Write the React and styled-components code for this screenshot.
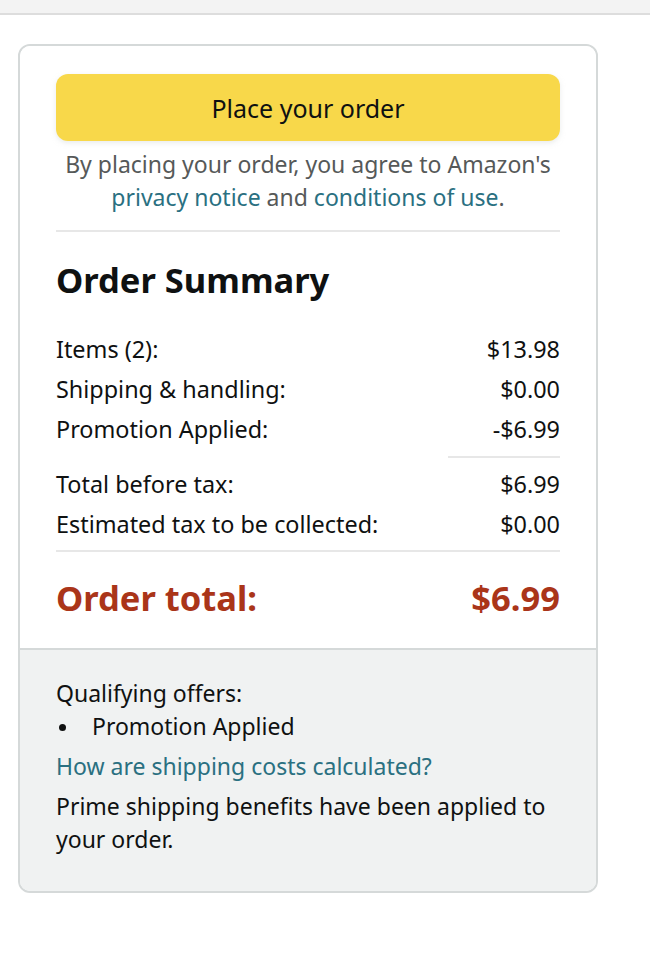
import React from "react";
import styled, { createGlobalStyle } from "styled-components";

const GlobalStyle = createGlobalStyle`
  body {
    margin: 0;
    background: #ffffff;
    font-family: "Noto Sans", "Liberation Sans", Arial, sans-serif;
    color: #0f1111;
  }
`;

const rows = [
  { label: "Items (2):", value: "$13.98" },
  { label: "Shipping & handling:", value: "$0.00" },
  { label: "Promotion Applied:", value: "-$6.99" },
];

const taxRows = [
  { label: "Total before tax:", value: "$6.99" },
  { label: "Estimated tax to be collected:", value: "$0.00" },
];

const App = () => {
  return (
    <Page>
      <GlobalStyle />
      <TopBar />
      <Card>
        <Main>
          <PlaceButton type="button">Place your order</PlaceButton>
          <Disclaimer>
            By placing your order, you agree to Amazon's{" "}
            <Link href="#">privacy notice</Link> and{" "}
            <Link href="#">conditions of use</Link>.
          </Disclaimer>
          <Divider />
          <Title>Order Summary</Title>
          <Rows>
            {rows.map((r) => (
              <Row key={r.label}>
                <span>{r.label}</span>
                <span>{r.value}</span>
              </Row>
            ))}
          </Rows>
          <ShortDivider />
          <Rows>
            {taxRows.map((r) => (
              <Row key={r.label}>
                <span>{r.label}</span>
                <span>{r.value}</span>
              </Row>
            ))}
          </Rows>
          <Divider tight />
          <TotalRow>
            <span>Order total:</span>
            <span>$6.99</span>
          </TotalRow>
        </Main>
        <Footer>
          <FooterText>Qualifying offers:</FooterText>
          <Offers>
            <Offer>Promotion Applied</Offer>
          </Offers>
          <FooterLink href="#">How are shipping costs calculated?</FooterLink>
          <FooterText spaced>
            Prime shipping benefits have been applied to your order.
          </FooterText>
        </Footer>
      </Card>
    </Page>
  );
};

const Page = styled.div`
  width: 650px;
  min-height: 960px;
`;

const TopBar = styled.div`
  height: 13px;
  background: #f3f3f3;
  border-bottom: 2px solid #dddddd;
`;

const Card = styled.div`
  margin: 29px 0 0 18px;
  width: 576px;
  border: 2px solid #d5d9d9;
  border-radius: 12px;
  overflow: hidden;
`;

const Main = styled.div`
  padding: 28px 36px 28px 36px;
  background: #ffffff;
`;

const PlaceButton = styled.button`
  display: block;
  width: 100%;
  height: 67px;
  border: none;
  border-radius: 12px;
  background: #f8d84a;
  box-shadow: 0 2px 5px rgba(213, 217, 217, 0.5);
  font-family: inherit;
  font-size: 25px;
  color: #0f1111;
  cursor: pointer;
`;

const Disclaimer = styled.p`
  margin: 7px 0 0;
  text-align: center;
  font-size: 23px;
  line-height: 33px;
  color: #565959;
`;

const Link = styled.a`
  color: #2a7081;
  text-decoration: none;
`;

const Divider = styled.hr`
  margin: ${(p) => (p.tight ? "6px 0 0" : "16px 0 0")};
  border: none;
  border-top: 2px solid #e7e7e7;
`;

const ShortDivider = styled.hr`
  margin: 7px 0 6px auto;
  width: 112px;
  border: none;
  border-top: 2px solid #e7e7e7;
`;

const Title = styled.h2`
  margin: 28px 0 0;
  font-size: 34.5px;
  line-height: 40px;
  font-weight: 700;
`;

const Rows = styled.div`
  display: flex;
  flex-direction: column;
  ${Title} + & {
    margin-top: 29px;
  }
`;

const Row = styled.div`
  display: flex;
  justify-content: space-between;
  font-size: 23.4px;
  line-height: 40px;
`;

const TotalRow = styled.div`
  display: flex;
  justify-content: space-between;
  margin-top: 24px;
  font-size: 34.5px;
  line-height: 44px;
  font-weight: 700;
  color: #aa3519;
`;

const Footer = styled.div`
  padding: 27px 36px 35px;
  background: #f0f2f2;
  border-top: 2px solid #d5d9d9;
`;

const FooterText = styled.p`
  margin: ${(p) => (p.spaced ? "7px 0 0" : "0")};
  font-size: 23px;
  line-height: 33px;
`;

const Offers = styled.ul`
  margin: 0;
  padding: 0;
  list-style: none;
`;

const Offer = styled.li`
  position: relative;
  padding-left: 36px;
  font-size: 23px;
  line-height: 33px;

  &::before {
    content: "";
    position: absolute;
    left: 3px;
    top: 14px;
    width: 7px;
    height: 7px;
    border-radius: 50%;
    background: #0f1111;
  }
`;

const FooterLink = styled.a`
  display: block;
  margin-top: 7px;
  font-size: 23px;
  line-height: 33px;
  color: #2a7081;
  text-decoration: none;
`;

export default App;
